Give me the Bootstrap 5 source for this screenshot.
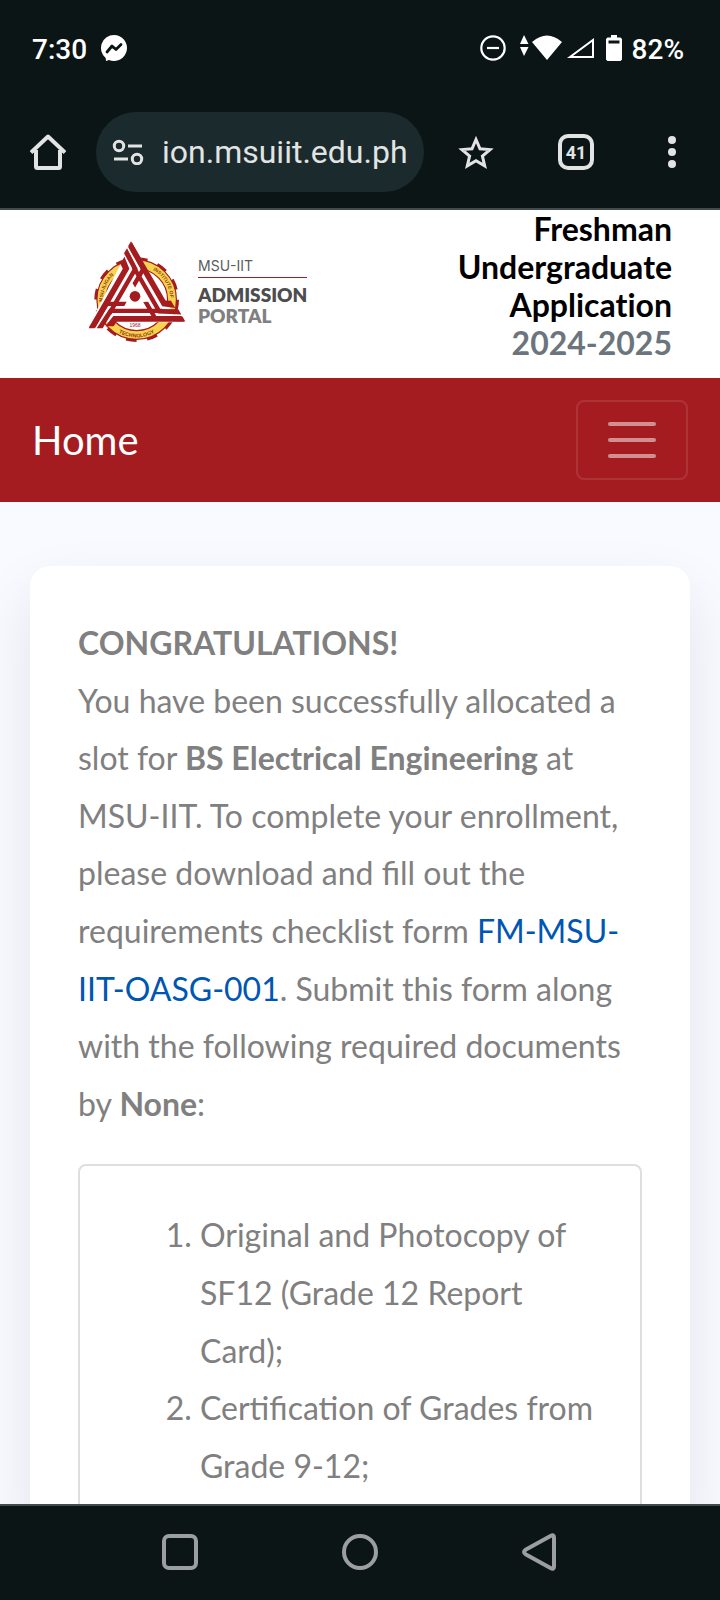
<!DOCTYPE html>
<html lang="en">
<head>
<meta charset="utf-8">
<meta name="viewport" content="width=device-width, initial-scale=1">
<title>MSU-IIT Admission Portal</title>
<link href="https://cdn.jsdelivr.net/npm/bootstrap@5.3.0/dist/css/bootstrap.min.css" rel="stylesheet">
<script src="https://cdn.jsdelivr.net/npm/bootstrap@5.3.0/dist/js/bootstrap.bundle.min.js" defer></script>
<style>
  body { font-family: Lato, "Liberation Sans", sans-serif; font-size: 32px; background: #f9faff; color: #808080; }
  .chrome-bar { background: #0c1516; color: #e2e4e3; font-family: Roboto, sans-serif; }
  .chrome-bar svg, .portal-logo svg { display: block; flex: none; }
  .status-row { height: 96px; padding: 4px 36px 0 32px; font-size: 28px; font-weight: 500; color: #fff; }
  .status-row .clock { gap: 14px; }
  .tool-row { height: 112px; border-bottom: 2px solid #414b4c; box-sizing: content-box; }
  .tool-btn { flex: none; width: 96px; height: 80px; padding: 0; border: 0; background: none; color: inherit; display: flex; align-items: center; justify-content: center; }
  .tool-btn-star { width: 104px; }
  .address { height: 80px; min-width: 0; border-radius: 40px; background: #1b2a2d; padding: 0 16px; gap: 18px; }
  .address input { background: none; border: 0; padding: 0; color: #e2e4e3; font-size: 32px; width: 100%; min-width: 0; outline: 0; }
  .bottom-row { border-top: 2px solid #414b4c; color: #9b9fa0; }
  .bottom-row button { height: 92px; width: 100%; margin-bottom: 2px; }
  .site-head { background: #fff; }
  .portal-logo { padding-left: 80px; gap: 8px; color: #4d4d4d; text-decoration: none; }
  .logo-small { font-family: Inter, sans-serif; font-size: 14px; line-height: 16px; border-bottom: 1px solid #a41c20; padding: 3px 0; margin-bottom: 6px; color: #5c5c5c; }
  .logo-big { font-size: 19px; font-weight: 800; line-height: 21px; }
  .logo-big span { color: #808080; }
  .head-title { font-size: 32px; font-weight: 700; line-height: 38px; color: #000; padding-right: 48px; margin: 0 0 16px; font-variant-ligatures: none; }
  .head-title span { color: #6c757d; }
  .site-nav { background: #a41c20; padding: 22px 32px; }
  .site-nav .navbar-brand { color: #fff; font-size: 40px; line-height: 60px; padding: 0; margin: 0; }
  .site-nav .navbar-toggler { width: 112px; height: 80px; padding: 0; border: 2px solid rgba(255,255,255,.1); border-radius: 8px; }
  .notice { margin: 64px 30px 0; padding: 48px 48px 0; border-radius: 20px; background: #fff; box-shadow: 0 25px 60px rgba(0,0,0,.09); line-height: 1.8; }
  .notice strong { font-weight: 700; }
  .notice a { color: #0056b3; text-decoration: none; }
  .req-box { margin-top: 32px; border: 2px solid #dfdfdf; border-bottom: 0; border-radius: 8px 8px 0 0; padding: 40px; }
  .req-box ol { padding-left: 80px; }
</style>
</head>
<body class="d-flex flex-column vh-100 overflow-hidden">

<header class="chrome-bar flex-shrink-0">
  <div class="status-row d-flex align-items-center justify-content-between">
    <div class="clock d-flex align-items-center">
      <span>7:30</span>
      <svg width="26" height="30" viewBox="0 0 26 30"><path fill="#fff" d="M13 0a13 13 0 1 1-5 25l-3 1-.3-3A13 13 0 0 1 13 0z"/><path d="M6 17l5-6 4 3.500L20 9.500" fill="none" stroke="#0c1516" stroke-width="2.800" stroke-linejoin="round" stroke-linecap="round"/></svg>
    </div>
    <div class="d-flex align-items-center">
      <svg width="26" height="30" viewBox="0 0 26 30" fill="none" stroke="#fff" stroke-width="2.200"><circle cx="13" cy="13" r="11.700"/><path d="M7 13h12"/></svg>
      <svg width="56" height="30" viewBox="-14 0 56 30" fill="#fff"><path d="M0 9L4 0l4.500 9zM0 12h8.500L4 21zM12 7Q27-6 42 7L27 25z"/></svg>
      <svg width="36" height="30" viewBox="0 0 36 30" fill="none" stroke="#fff" stroke-width="2"><path d="M8 22L31 5v17z"/></svg>
      <svg class="ms-2 me-2" width="18" height="30" viewBox="0 0 18 30"><path fill="#fff" fill-rule="evenodd" d="M5 0h6v2.500h3.500L16 4v20.500L14.500 26h-13L0 24.500V4l1.500-1.500H5zM2.500 5.500v3h11v-3z"/></svg>
      <span>82%</span>
    </div>
  </div>
  <div class="tool-row d-flex align-items-center">
    <button class="tool-btn" type="button" aria-label="Home page"><svg width="36" height="36" viewBox="0 0 36 36" fill="none" stroke="currentColor" stroke-width="4" stroke-linejoin="round"><path d="M1 18.500L18 2.500l17 16M6 16v16.500q0 1.500 1.500 1.500h21q1.500 0 1.500-1.500V16"/></svg></button>
    <div class="address flex-grow-1 d-flex align-items-center">
      <svg width="32" height="26" viewBox="0 0 32 26" fill="none" stroke="currentColor" stroke-width="3"><circle cx="7" cy="7" r="4.700"/><path d="M16 7h14M2 20h14"/><circle cx="25" cy="20" r="4.700"/></svg>
      <input type="text" value="ion.msuiit.edu.ph" aria-label="Address">
    </div>
    <button class="tool-btn tool-btn-star" type="button" aria-label="Bookmark"><svg width="36" height="36" viewBox="0 0 36 36" fill="none" stroke="currentColor" stroke-width="3"><path d="M18 5.500l4 9.300 10 .8-7.600 6.500 2.300 9.800L18 26.700l-8.700 5.200 2.300-9.800L4 15.600l10-.8z"/></svg></button>
    <button class="tool-btn" type="button" aria-label="Tabs"><svg width="36" height="36" viewBox="0 0 36 36"><rect x="2" y="2" width="32" height="32" rx="8" fill="none" stroke="currentColor" stroke-width="4"/><text x="18" y="25" text-anchor="middle" font-size="18" font-weight="700" fill="currentColor" font-family="Roboto, sans-serif">41</text></svg></button>
    <button class="tool-btn" type="button" aria-label="Menu"><svg width="8" height="32" viewBox="0 0 8 32" fill="currentColor"><circle cx="4" cy="4" r="4"/><circle cx="4" cy="16" r="4"/><circle cx="4" cy="28" r="4"/></svg></button>
  </div>
</header>

<main class="d-flex flex-column flex-grow-1 overflow-hidden">
  <div class="site-head row g-0 align-items-center flex-shrink-0">
    <a href="#" class="portal-logo col-6 d-flex align-items-center pb-2">
      <svg width="110" height="110" viewBox="0 0 330 330" role="img" aria-label="MSU-IIT seal">
        <defs>
          <path id="ring" d="M170 295a101 101 0 1 1 .1 0"/>
          <path id="ringlow" d="M57 194a113 113 0 0 0 226 0"/>
          <g id="arm" fill="#a41c20">
            <path d="M26 280L76 200H140L133 213H84L43 280z"/>
            <path d="M50 280L88 221H246L251 234H96L68 280z"/>
            <path d="M76 274L100 243H304L312 260H110L101 274z"/>
          </g>
        </defs>
        <circle cx="170" cy="194" r="122" fill="none" stroke="#a41c20" stroke-width="10" stroke-dasharray="31.940"/>
        <circle cx="170" cy="194" r="106" fill="#fff" stroke="#a41c20" stroke-width="30"/>
        <circle cx="170" cy="194" r="106" fill="none" stroke="#f8d34b" stroke-width="23"/>
        <g font-family="Liberation Sans, sans-serif" font-size="15" font-weight="700" fill="#8c3c1d">
          <text><textPath href="#ring" startOffset="24%">MSU-ILIGAN</textPath></text>
          <text><textPath href="#ring" startOffset="58%">INSTITUTE OF</textPath></text>
        </g>
        <path d="M155 24L288 248L308 262H26L42 242z" fill="#fff"/>
        <use href="#arm"/>
        <use href="#arm" transform="rotate(120 165 186)"/>
        <use href="#arm" transform="rotate(240 165 186)"/>
        <circle cx="165" cy="184" r="16" fill="#a41c20"/>
        <text x="165" y="277" text-anchor="middle" font-family="Liberation Sans, sans-serif" font-size="15" fill="#a41c20">1968</text>
        <text font-family="Liberation Sans, sans-serif" font-size="16" font-weight="700" fill="#8c3c1d"><textPath href="#ringlow" startOffset="50%" text-anchor="middle">TECHNOLOGY</textPath></text>
      </svg>
      <div>
        <div class="logo-small">MSU-IIT</div>
        <div class="logo-big">ADMISSION<br><span>PORTAL</span></div>
      </div>
    </a>
    <h1 class="head-title col-6 text-end">Freshman Undergraduate Application <span class="d-block">2024-2025</span></h1>
  </div>

  <nav class="site-nav navbar flex-shrink-0 d-flex justify-content-between align-items-center">
    <a class="navbar-brand" href="#">Home</a>
    <button class="navbar-toggler d-flex align-items-center justify-content-center" type="button" aria-label="Toggle navigation">
      <svg width="60" height="60" viewBox="0 0 60 60" stroke="#fff" stroke-opacity=".5" stroke-width="4" stroke-linecap="round"><path d="M8 14h44M8 30h44M8 46h44"/></svg>
    </button>
  </nav>

  <section class="notice d-flex flex-column flex-grow-1">
    <p class="m-0"><strong>CONGRATULATIONS!</strong><br>
      You have been successfully allocated a slot for <strong>BS Electrical Engineering</strong> at MSU-IIT. To complete your enrollment, please download and fill out the requirements checklist form <a href="#">FM-MSU-IIT-OASG-001</a>. Submit this form along with the following required documents by <strong>None</strong>:</p>
    <div class="req-box flex-grow-1">
      <ol class="m-0">
        <li>Original and Photocopy of SF12 (Grade 12 Report Card);</li>
        <li>Certification of Grades from Grade 9-12;</li>
      </ol>
    </div>
  </section>
</main>

<footer class="chrome-bar bottom-row flex-shrink-0">
  <div class="row g-0 justify-content-center">
    <div class="col-3"><button class="tool-btn" type="button" aria-label="Recent apps"><svg width="36" height="36" viewBox="0 0 36 36" fill="none" stroke="currentColor" stroke-width="4"><rect x="2" y="2" width="32" height="32" rx="5"/></svg></button></div>
    <div class="col-3"><button class="tool-btn" type="button" aria-label="Home screen"><svg width="36" height="36" viewBox="0 0 36 36" fill="none" stroke="currentColor" stroke-width="4"><circle cx="18" cy="18" r="16"/></svg></button></div>
    <div class="col-3"><button class="tool-btn" type="button" aria-label="Back"><svg width="38" height="38" viewBox="0 0 38 38" fill="none" stroke="currentColor" stroke-width="4" stroke-linejoin="round"><path d="M33 4.500v29q0 3.500-3.500 1.500L5 21.500q-4-2.500 0-5L29.500 3Q33 1 33 4.500z"/></svg></button></div>
  </div>
</footer>
</body>
</html>
